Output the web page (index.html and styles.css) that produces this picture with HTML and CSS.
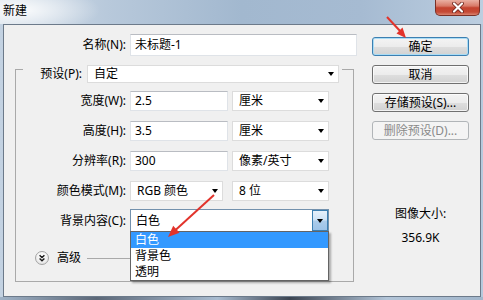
FILE: index.html
```html
<!DOCTYPE html>
<html lang="zh-CN">
<head>
<meta charset="utf-8">
<title>新建</title>
<link rel="stylesheet" href="styles.css">
</head>
<body>
<div class="window">
  <div class="titlebar">
    <span class="title">新建</span>
    <div class="close">
      <svg width="14" height="11" viewBox="0 0 14 11">
        <path d="M3 1.5 L11 9.5 M11 1.5 L3 9.5" stroke="#6a2118" stroke-width="3.8" stroke-linecap="round"/>
        <path d="M3 1.5 L11 9.5 M11 1.5 L3 9.5" stroke="#ffffff" stroke-width="2.2" stroke-linecap="round"/>
      </svg>
    </div>
  </div>
  <div class="client">
    <div class="left">
      <div class="name-row">
        <span class="lbl lbl-name">名称(N):</span>
        <div class="input input-name">未标题-1</div>
      </div>
      <div class="group">
        <div class="group-head">
          <span class="lbl-preset">预设(P):</span>
          <div class="select select-preset"><span>自定</span><i class="arrow"></i></div>
        </div>
        <div class="row first">
          <span class="lbl">宽度(W):</span>
          <div class="input input-num">2.5</div>
          <div class="select unit"><span>厘米</span><i class="arrow"></i></div>
        </div>
        <div class="row">
          <span class="lbl">高度(H):</span>
          <div class="input input-num">3.5</div>
          <div class="select unit"><span>厘米</span><i class="arrow"></i></div>
        </div>
        <div class="row">
          <span class="lbl">分辨率(R):</span>
          <div class="input input-num">300</div>
          <div class="select unit"><span>像素/英寸</span><i class="arrow"></i></div>
        </div>
        <div class="row">
          <span class="lbl">颜色模式(M):</span>
          <div class="select mode"><span>RGB 颜色</span><i class="arrow"></i></div>
          <div class="select bits"><span>8 位</span><i class="arrow"></i></div>
        </div>
        <div class="row bg-row">
          <span class="lbl">背景内容(C):</span>
          <div class="combo">
            <span class="combo-text">白色</span>
            <span class="combo-btn"><i class="arrow"></i></span>
            <ul class="dropdown">
              <li class="sel">白色</li>
              <li>背景色</li>
              <li>透明</li>
            </ul>
          </div>
        </div>
        <div class="adv-row">
          <span class="adv-icon">
            <svg width="14" height="14" viewBox="0 0 14 14">
              <path d="M4.6 4.2 L7 6.6 L9.4 4.2 M4.6 7.4 L7 9.8 L9.4 7.4" fill="none" stroke="#1a1a1a" stroke-width="1.4"/>
            </svg>
          </span>
          <span class="adv-text">高级</span>
          <span class="adv-line"></span>
        </div>
      </div>
    </div>
    <div class="right">
      <div class="btns">
        <div class="btn default">确定</div>
        <div class="btn">取消</div>
        <div class="btn">存储预设(S)...</div>
        <div class="btn disabled">删除预设(D)...</div>
      </div>
      <div class="size">
        <div class="size-label">图像大小:</div>
        <div class="size-value">356.9K</div>
      </div>
    </div>
  </div>
  <div class="bottom-frame"></div>
  <svg class="annot" width="483" height="300" viewBox="0 0 483 300">
    <line x1="387" y1="17" x2="401" y2="32" stroke="#e2332b" stroke-width="2"/>
    <polygon points="406,38 396.5,33.5 402.5,27.5" fill="#e2332b"/>
    <line x1="214" y1="195" x2="175" y2="230.5" stroke="#e2332b" stroke-width="2"/>
    <polygon points="168,237 173.2,225.8 179.6,232.8" fill="#e2332b"/>
  </svg>
</div>
</body>
</html>
```
FILE: styles.css
```css
* { box-sizing: border-box; }
html, body { margin: 0; padding: 0; }
body {
  font-family: "Noto Sans", "Noto Sans CJK SC", sans-serif;
  font-size: 12px;
  line-height: 16px;
  color: #000;
  background: #b4c6d9;
}
ul { margin: 0; padding: 0; list-style: none; }

.window {
  position: relative;
  width: 483px;
  height: 300px;
  display: flex;
  flex-direction: column;
  overflow: hidden;
  background: linear-gradient(to right, #c3d2e2 0%, #a5bad0 40%, #9db3cb 70%, #b6c9dc 100%);
}

.titlebar {
  flex: none;
  height: 24px;
  display: flex;
  align-items: flex-start;
  background:
    radial-gradient(ellipse 80px 24px at 20px 10px, rgba(255,255,255,0.9), rgba(255,255,255,0) 100%),
    linear-gradient(to right, #d6e0ea 0%, #b8c9db 22%, #a2b8cf 50%, #a6bbd2 75%, #bccee0 100%);
}
.title {
  padding: 3px 0 0 3px;
  font-size: 12px;
  line-height: 16px;
  color: #000;
}
.close {
  margin-left: auto;
  margin-right: 3px;
  width: 45px;
  height: 16px;
  border: 1px solid #7a3026;
  border-top: none;
  border-radius: 0 0 5px 5px;
  background: linear-gradient(#eab0a3 0%, #d87a68 40%, #c4432f 52%, #c54a36 80%, #da8470 100%);
  display: flex;
  align-items: center;
  justify-content: center;
}

.client {
  flex: none;
  height: 273px;
  margin: 0 2px 0 3px;
  border: 1px solid #6c7a8a;
  background: #f0f0f0;
  display: flex;
}
.bottom-frame {
  flex: 1;
  background: linear-gradient(to right, #9fb2c6 0%, #5c6878 20%, #a9bcd0 45%, #3c4552 60%, #b3c5d8 80%, #a2b6cb 100%);
}

/* left column */
.left {
  flex: none;
  width: 352px;
  padding-top: 9px;
}
.name-row {
  display: flex;
  align-items: center;
  height: 22px;
}
.lbl {
  flex: none;
  text-align: right;
  white-space: nowrap;
}
.lbl-name {
  width: 122px;
  margin-right: 4px;
}
.input {
  flex: none;
  display: flex;
  align-items: center;
  height: 20px;
  padding-left: 4px;
  background: #fff;
  border: 1px solid #dfe3e8;
  border-top-color: #b9bcc2;
  white-space: nowrap;
}
.input-name {
  width: 227px;
  height: 22px;
}
.input-num { width: 98px; }

.group {
  margin: 13px 0 0 11px;
  width: 339px;
  border: 1px solid #a9a9a9;
  padding-bottom: 16px;
}
.group-head {
  display: flex;
  align-items: center;
  width: max-content;
  height: 18px;
  margin: -5px 0 0 7px;
  padding: 0 3px 0 14px;
  background: #f0f0f0;
}
.lbl-preset {
  width: 45px;
  margin-right: 5px;
  text-align: right;
  white-space: nowrap;
}
.select {
  flex: none;
  display: flex;
  align-items: center;
  height: 20px;
  padding: 0 4px 0 6px;
  background: #fff;
  border: 1px solid #dcdcdc;
  white-space: nowrap;
}
.select-preset {
  width: 252px;
  height: 18px;
}
.arrow {
  display: block;
  margin-left: auto;
  width: 0;
  height: 0;
  border-left: 3.5px solid transparent;
  border-right: 3.5px solid transparent;
  border-top: 4px solid #000;
}

.row {
  display: flex;
  align-items: center;
  height: 20px;
  margin-top: 10px;
}
.row.first { margin-top: 8px; }
.row .lbl {
  width: 110px;
  margin-right: 4px;
}
.unit {
  width: 97px;
  margin-left: 4px;
}
.mode { width: 93px; }
.bits {
  width: 97px;
  margin-left: 9px;
}

.bg-row {
  height: 23px;
  margin-top: 8px;
}
.combo {
  position: relative;
  flex: none;
  width: 199px;
  height: 23px;
  display: flex;
  align-items: stretch;
  background: #fff;
  border: 1px solid #7391ad;
}
.combo-text {
  flex: 1;
  display: flex;
  align-items: center;
  padding-left: 5px;
}
.combo-btn {
  flex: none;
  width: 16px;
  display: flex;
  align-items: center;
  justify-content: center;
  border: 1px solid #3c7fb1;
  background: linear-gradient(#e6f1fb 0%, #cfe4f7 45%, #aacbea 55%, #9cc3e8 100%);
}
.combo-btn .arrow { margin: 0; }
.dropdown {
  position: absolute;
  left: -1px;
  top: 100%;
  width: 199px;
  border: 1px solid #646464;
  background: #fff;
  box-shadow: 2px 2px 2px rgba(0,0,0,0.3);
  padding: 0;
}
.dropdown li {
  height: 16px;
  line-height: 16px;
  padding-left: 4px;
}
.dropdown li.sel {
  background: #3399ff;
  color: #fff;
}

.adv-row {
  display: flex;
  align-items: center;
  height: 14px;
  margin-top: 19px;
  padding-left: 19px;
}
.adv-icon {
  flex: none;
  width: 14px;
  height: 14px;
  border-radius: 50%;
  border: 1px solid #a3a3a3;
  background: radial-gradient(circle at 50% 35%, #ffffff 0%, #f2f2f2 50%, #d9d9d9 100%);
  display: flex;
  align-items: center;
  justify-content: center;
}
.adv-icon svg { display: block; margin: -1px; }
.adv-text {
  margin-left: 8px;
  white-space: nowrap;
}
.adv-line {
  flex: none;
  width: 120px;
  height: 1px;
  margin-left: 6px;
  background: #a9a9a9;
}

/* right column */
.right {
  flex: 1;
  padding: 12px 0 0 16px;
}
.btns {
  display: flex;
  flex-direction: column;
  gap: 9px;
}
.btn {
  width: 97px;
  height: 19px;
  line-height: 17px;
  text-align: center;
  white-space: nowrap;
  border: 1px solid #707070;
  border-radius: 3px;
  background: linear-gradient(#f4f4f4 0%, #ececec 50%, #dedede 52%, #d2d2d2 100%);
  box-shadow: inset 0 0 0 1px rgba(255,255,255,0.7);
}
.btn.default {
  border-color: #3c7fb1;
  box-shadow: inset 0 0 0 1px #a9dcf5;
}
.btn.disabled {
  color: #8a8a8a;
  border-color: #b1b5b8;
  background: #f4f4f4;
  box-shadow: none;
}
.size {
  width: 97px;
  margin-top: 66px;
  text-align: center;
}
.size-value { margin-top: 8px; }

.annot {
  position: absolute;
  left: 0;
  top: 0;
  pointer-events: none;
}
```
